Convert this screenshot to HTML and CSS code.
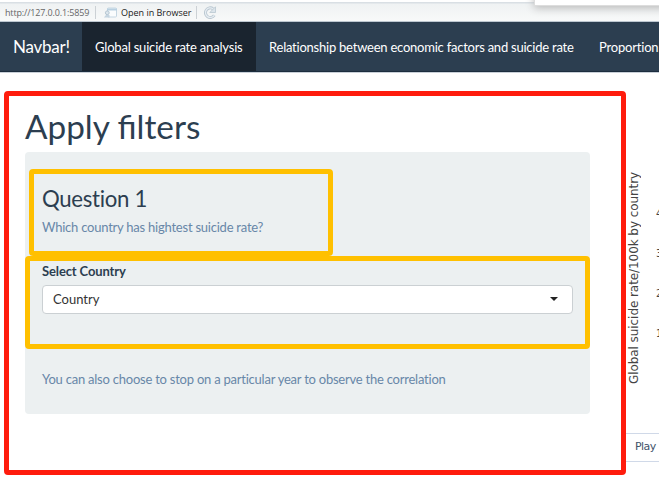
FILE: index.html
```
<!DOCTYPE html>
<html lang="en">
<head>
<meta charset="utf-8">
<title>Global suicide rate analysis</title>
<link rel="stylesheet" href="styles.css">
</head>
<body>
<div class="window">
  <div class="toolbar">
    <span class="url">http://127.0.0.1:5859</span>
    <span class="divider"></span>
    <span class="open">
      <svg class="open-icon" width="14" height="12" viewBox="0 0 14 12"><rect x="4.5" y="1" width="9" height="9" rx="1" fill="#fafcfd" stroke="#c5d6e2"/><path d="M4 1.500h10v2H4z" fill="#b9d0e1"/><circle cx="4.300" cy="5.800" r="1.900" fill="#dce6ed" stroke="#b4c5d1"/><path d="M.8 10.500 3 8h3.500v2.500z" fill="#c4d4e0"/></svg>
      <span class="open-text">Open in Browser</span>
    </span>
    <span class="divider second"></span>
    <svg class="reload" width="14" height="14" viewBox="0 0 14 14"><path d="M11.300 9.300A4.800 4.800 0 1 1 10 2.700" fill="none" stroke="#b9c6d0" stroke-width="3"/><path d="M11.300 9.300A4.800 4.800 0 1 1 10 2.700" fill="none" stroke="#e6edf2" stroke-width="1.300"/><path d="M12.500.8v5.700H6.800z" fill="#dce5ec" stroke="#b9c6d0" stroke-width=".8"/></svg>
  </div>
  <nav class="navbar">
    <a class="brand"><span>Navbar!</span></a>
    <a class="tab active"><span>Global suicide rate analysis</span></a>
    <a class="tab relationship"><span>Relationship between economic factors and suicide rate</span></a>
    <a class="tab"><span>Proportion</span></a>
  </nav>
  <div class="content">
    <main class="filters">
      <h1><span>Apply filters</span></h1>
      <section class="well">
        <h3><span>Question 1</span></h3>
        <p class="help question"><span>Which country has hightest suicide rate?</span></p>
        <div class="label"><span>Select Country</span></div>
        <div class="select"><span>Country</span><i class="caret"></i></div>
        <p class="help note"><span>You can also choose to stop on a particular year to observe the correlation</span></p>
      </section>
    </main>
    <aside class="chart">
      <div class="plot">
        <div class="axis-title"><span>Global suicide rate/100k by country</span></div>
        <div class="ticks"><span>4</span><span>3</span><span>2</span><span>1</span></div>
      </div>
      <div class="play"><span>Play</span></div>
    </aside>
  </div>
  <div class="popup"></div>
  <div class="mark red"></div>
  <div class="mark question-mark"></div>
  <div class="mark select-mark"></div>
</div>
</body>
</html>
```

FILE: styles.css
```
* { box-sizing: border-box; }
body { margin: 0; background: #fff; font-family: Lato, sans-serif; color: #2c3e50; }
.window { position: relative; width: 659px; height: 486px; overflow: hidden; background: #fff; }
.toolbar { display: flex; align-items: center; height: 22px; padding: 4px 0 0 5px; border-bottom: 1px solid #bdc7d0; background: linear-gradient(#fff 0 2px, #d9dfe4 2px 3px, #eff2f3 4px, #f8f9f9 21px); font-family: "Open Sans", sans-serif; font-size: 9px; line-height: 14px; white-space: nowrap; }
.url { width: 90px; color: #666; letter-spacing: -.15px; }
.divider { width: 1px; height: 13px; background: #ccd1d5; }
.open { display: flex; align-items: center; width: 100px; padding-left: 7px; color: #222; }
.open-text { margin-left: 4px; }
.reload { margin-left: 6px; }
.navbar { display: flex; height: 50px; background: #2c3e50; border-bottom: 1px solid #1c2d3e; box-shadow: 0 1px #c9d0d8; color: #fff; white-space: nowrap; }
.navbar a { flex-shrink: 0; }
.brand { width: 82px; padding-left: 13px; font-size: 17px; line-height: 49px; letter-spacing: -.25px; }
.tab { padding: 0 13px; font-size: 13px; line-height: 50px; letter-spacing: -.19px; }
.tab.active { width: 174px; background: #1a242f; }
.relationship { width: 330px; letter-spacing: -.23px; }
.content { display: flex; height: 414px; }
.filters { width: 626px; padding: 34px 36px 0 25px; }
h1 { height: 46px; margin: 0; font-size: 33.300px; line-height: 41px; font-weight: 400; white-space: nowrap; }
.well { width: 565px; height: 262px; padding: 32px 17px 0; background: #ecf0f1; border-radius: 4px; }
h3 { height: 32px; margin: 0; font-size: 22.200px; line-height: 29px; font-weight: 400; letter-spacing: -.3px; }
.help { margin: 0; font-size: 13px; line-height: 20px; color: #6887a8; white-space: nowrap; letter-spacing: -.23px; }
.question { height: 46px; padding-top: 1px; }
.label { height: 23px; font-size: 13px; line-height: 19px; font-weight: 700; letter-spacing: -.13px; }
.select { display: flex; align-items: center; justify-content: space-between; height: 29px; padding: 0 14px 1px 10px; border: 1px solid #cbd0d3; border-radius: 4px; background: #fff; color: #333; font-size: 13px; line-height: 20px; }
.caret { border: 4px solid transparent; border-top-color: #222; border-bottom: 0; }
.note { margin-top: 55px; }
.chart { width: 33px; overflow: hidden; }
.plot { display: flex; height: 361px; }
.axis-title { width: 16px; height: 312px; writing-mode: vertical-rl; transform: rotate(180deg); font: 12px/16px "DejaVu Sans", sans-serif; letter-spacing: -.07px; color: #444; white-space: nowrap; }
.ticks { display: grid; grid-template-rows: repeat(4, 40px); padding: 122px 0 0 14px; font: 10px/40px "DejaVu Sans", sans-serif; color: #444; }
.play { height: 29px; padding-left: 9px; border: solid #d0d9e8; border-width: 1px 0; font: 11px/26px "DejaVu Sans", sans-serif; letter-spacing: -.6px; color: #42526a; }
.popup { position: absolute; left: 534px; top: -8px; width: 140px; height: 14px; background: #fff; border: 1px solid #ddd; box-shadow: 0 2px 8px #b8b8b8; }
.mark { position: absolute; border: 5px solid #ffc000; border-radius: 4px; }
.red { left: 4px; top: 91px; width: 622px; height: 384px; border-color: #ff1c0d; }
.question-mark { left: 29px; top: 169px; width: 304px; height: 87px; }
.select-mark { left: 25px; top: 256px; width: 565px; height: 93px; }
```
